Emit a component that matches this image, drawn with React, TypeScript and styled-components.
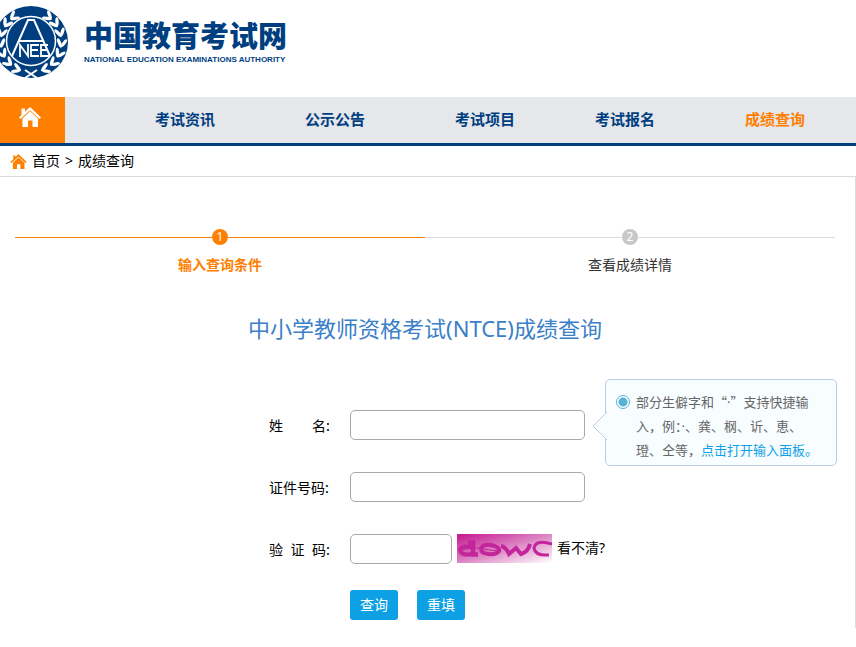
import React from 'react';
import styled, { createGlobalStyle } from 'styled-components';

const GlobalStyle = createGlobalStyle`
  * { box-sizing: border-box; }
  body {
    margin: 0;
    background: #fff;
    color: #000;
    font: 14px/20px "Noto Sans", "Noto Sans CJK SC", sans-serif;
  }
  a { color: inherit; text-decoration: none; }
  button, input { font: inherit; }
`;

const Header = styled.header`
  display: flex;
  gap: 16px;
  height: 97px;
  padding-top: 5px;
`;

const Emblem = styled.svg`
  flex: none;
  width: 68px;
  height: 74px;
`;

const Brand = styled.div`
  padding-top: 14px;
  color: #003f7f;
  white-space: nowrap;
`;

const BrandName = styled.div`
  font: 900 29px/30px "Noto Sans CJK SC", sans-serif;
`;

const BrandSub = styled.div`
  padding-top: 6px;
  font: bold 8px/10px "Liberation Sans", sans-serif;
`;

const Nav = styled.nav`
  display: flex;
  height: 49px;
  background: #e6e7eb;
  border-bottom: 3px solid #003f7f;
`;

const HomeTab = styled.a`
  display: flex;
  justify-content: center;
  width: 65px;
  padding: 9px 5px 0 0;
  background: #ff8000;
  color: #fff;
`;

const NavList = styled.ul`
  display: flex;
  margin: 0;
  padding: 0 0 0 45px;
  list-style: none;
`;

const NavItem = styled.li<{ $tight?: boolean }>`
  padding: 0 45px 0 ${p => (p.$tight ? 35 : 45)}px;
`;

const NavLink = styled.a<{ $active?: boolean }>`
  color: ${p => (p.$active ? '#ff8000' : '#003f7f')};
  font-size: 15px;
  font-weight: bold;
  line-height: 44px;
  white-space: nowrap;
`;

const Crumbs = styled.nav`
  display: flex;
  align-items: center;
  gap: 5px;
  height: 30px;
  padding-left: 10px;
`;

const Panel = styled.main`
  border: solid #dcdcdc;
  border-width: 1px 1px 0 0;
  padding: 52px 20px 8px 15px;
`;

const Steps = styled.ol`
  display: flex;
  margin: 0;
  padding: 0;
  list-style: none;
`;

const Step = styled.li<{ $active?: boolean }>`
  flex: 1;
  display: flex;
  flex-direction: column;
  align-items: center;
  gap: 10px;
  color: ${p => (p.$active ? '#ff8000' : '#333')};
  font-weight: ${p => (p.$active ? 'bold' : 'normal')};
`;

const StepTrack = styled.div<{ $active?: boolean }>`
  display: flex;
  align-items: center;
  width: 100%;
  color: ${p => (p.$active ? '#ff8000' : '#dcdcdc')};
  &::before, &::after {
    content: "";
    flex: 1;
    height: 1px;
    background: currentColor;
  }
`;

const StepDot = styled.span<{ $active?: boolean }>`
  display: block;
  width: 16px;
  height: 16px;
  border-radius: 50%;
  background: ${p => (p.$active ? '#ff8000' : '#c8c8c8')};
  color: #fff;
  font: 12px/16px "Noto Sans", sans-serif;
  text-align: center;
`;

const Title = styled.h1`
  margin: 37px 0 66px;
  color: #3a80c8;
  font-size: 22px;
  font-weight: normal;
  line-height: 32px;
  text-align: center;
`;

const Form = styled.form`
  display: grid;
  grid-template-columns: 61px minmax(0, 1fr);
  column-gap: 20px;
  row-gap: 32px;
  width: 566px;
  margin-left: calc(50% - 156px);
`;

const Label = styled.label`
  display: flex;
  justify-content: space-between;
  height: 30px;
  line-height: 30px;
  font-family: "Noto Sans CJK SC", sans-serif;
  white-space: nowrap;
`;

const Field = styled.div`
  display: flex;
  height: 30px;
  gap: 5px;
`;

const TextInput = styled.input<{ $short?: boolean }>`
  flex: none;
  width: ${p => (p.$short ? 102 : 235)}px;
  height: 30px;
  padding: 0 8px;
  border: 1px solid #a9a9a9;
  border-radius: 5px;
  background: #fff;
`;

const Anchor = styled.div`
  position: relative;
`;

const Tip = styled.aside`
  position: absolute;
  top: -31px;
  left: 255px;
  display: flex;
  gap: 6px;
  width: 232px;
  height: 87px;
  padding: 10px 20px 0 10px;
  border: 1px solid #bccbe8;
  border-radius: 5px;
  background: #f8fdff;
  color: #666;
  font: 13px/24px "Noto Sans CJK SC", sans-serif;
  p { margin: 0; white-space: nowrap; }
  a { color: #0ea0e4; }
`;

const Dot = styled.span`
  font-family: "Noto Sans", sans-serif;
`;

const TipArrow = styled.svg`
  position: absolute;
  top: 31px;
  left: -15px;
  width: 16px;
  height: 30px;
`;

const TipRadio = styled.input`
  appearance: none;
  flex: none;
  width: 14px;
  height: 14px;
  margin: 5px 0 0 0;
  border: 1px solid #58b2d4;
  border-radius: 50%;
  background: radial-gradient(circle, #58b2d4 4px, #fff 5px);
`;

const Refresh = styled.a`
  line-height: 28px;
  white-space: nowrap;
`;

const Actions = styled.div`
  grid-column: 2;
  display: flex;
  gap: 19px;
  margin-top: -6px;
`;

const Action = styled.button`
  width: 48px;
  height: 30px;
  padding: 0;
  border: 0;
  border-radius: 3px;
  background: #0ea0e4;
  color: #fff;
`;

function HomeIcon({ width, height }: { width: number; height: number }) {
  return (
    <svg width={width} height={height} viewBox="0 0 22 20" fill="currentColor" aria-hidden="true">
      <path d="M11 0 22 10.500 20.500 12 11 3.300 1.500 12 0 10.500 2.500 8V1.500H6V4.800Z" />
      <path d="M11 4.300 19 11.500V20H13.500V13.500H9V20H3.500V11.500Z" />
    </svg>
  );
}

const stemAngles = [118, 138, 158, 178, 198, 218, 236];

function Wreath() {
  return (
    <g>
      {stemAngles.map(deg => {
        const a = (deg * Math.PI) / 180;
        const at = (r: number) => [31 + r * Math.cos(a), 37 + r * Math.sin(a)];
        const [ix, iy] = at(28.5);
        const [ox, oy] = at(33);
        return (
          <g key={deg} fill="#fff">
            <ellipse cx={ix} cy={iy} rx="1.700" ry="5" transform={`rotate(${deg - 155} ${ix} ${iy})`} />
            <ellipse cx={ox} cy={oy} rx="1.700" ry="4.500" transform={`rotate(${deg - 215} ${ox} ${oy})`} />
          </g>
        );
      })}
    </g>
  );
}

function Logo() {
  return (
    <Emblem viewBox="0 0 68 74" role="img" aria-label="NEEA">
      <ellipse cx="31" cy="37" rx="37" ry="36" fill="#003f7f" />
      <Wreath />
      <g transform="translate(62 0) scale(-1 1)"><Wreath /></g>
      <circle cx="31" cy="36" r="24.500" fill="#003f7f" stroke="#fff" strokeWidth="1.500" />
      <g fill="none" stroke="#fff" strokeWidth="2">
        <path d="M12 51 28 15H34L50 51M19 36H43" />
        <path d="M20 52V40L28 51V39M39 40H31V51H39M31 45H38M48 40H41V51H50M41 45H48" strokeWidth="1.800" />
        <path d="M25 65 37 73M37 65 25 73" />
      </g>
    </Emblem>
  );
}

function Captcha() {
  return (
    <svg width="95" height="29" viewBox="0 0 95 29" role="img" aria-label="dowc">
      <defs>
        <linearGradient id="shade" x1="0" y1="0" x2="1" y2="1">
          <stop offset="0" stopColor="#c7158f" />
          <stop offset="0.500" stopColor="#dc86c4" />
          <stop offset="1" stopColor="#fff" />
        </linearGradient>
      </defs>
      <rect width="95" height="29" fill="url(#shade)" />
      <g fill="none" stroke="#c3269a" strokeWidth="4">
        <path d="M15 13Q4 11 3 16Q4 22 15 20" />
        <path d="M11 8.500H16V20.500H21" strokeWidth="4.500" />
        <path d="M24 15Q25 10 34 11Q43 13 42 17Q39 21 31 20Q24 19 24 15Z" />
        <path d="M44 12Q49 13 52 20L59 14 64 20Q71 18 73 10" />
        <path d="M95 10Q79 5 77 14Q78 22 92 21" strokeWidth="3" />
      </g>
      <path d="M2 17Q15 12 27 15T43 15" fill="none" stroke="#c3269a" />
    </svg>
  );
}

const links = ['考试资讯', '公示公告', '考试项目', '考试报名', '成绩查询'];

export default function App() {
  return (
    <>
      <GlobalStyle />
      <Header>
        <Logo />
        <Brand>
          <BrandName>中国教育考试网</BrandName>
          <BrandSub>NATIONAL EDUCATION EXAMINATIONS AUTHORITY</BrandSub>
        </Brand>
      </Header>
      <Nav>
        <HomeTab href="#" aria-label="首页"><HomeIcon width={22} height={22} /></HomeTab>
        <NavList>
          {links.map((text, i) => (
            <NavItem key={text} $tight={i === 3}>
              <NavLink href="#" $active={i === 4}>{text}</NavLink>
            </NavItem>
          ))}
        </NavList>
      </Nav>
      <Crumbs>
        <svg width="17" height="15" viewBox="0 0 22 20" fill="#ff8000" aria-hidden="true">
          <path d="M11 0 22 10.500 20.500 12 11 3.500 1.500 12 0 10.500 4 7V2H7V4Z" />
          <path d="M11 4.500 19 11.500V20H13.500V13.500H9V20H3.500V11.500Z" />
        </svg>
        <a href="#">首页</a>
        <span>&gt;</span>
        <a href="#">成绩查询</a>
      </Crumbs>
      <Panel>
        <Steps>
          <Step $active>
            <StepTrack $active><StepDot $active>1</StepDot></StepTrack>
            输入查询条件
          </Step>
          <Step>
            <StepTrack><StepDot>2</StepDot></StepTrack>
            查看成绩详情
          </Step>
        </Steps>
        <Title>中小学教师资格考试(NTCE)成绩查询</Title>
        <Form>
          <Label htmlFor="name"><span>姓</span><span>名:</span></Label>
          <Anchor>
            <TextInput id="name" type="text" />
            <Tip>
              <TipArrow viewBox="0 0 16 30" aria-hidden="true">
                <path d="M16 1 2 15 16 29" fill="#f8fdff" stroke="#bccbe8" />
              </TipArrow>
              <TipRadio type="radio" defaultChecked aria-label="快捷输入" />
              <p>
                部分生僻字和“<Dot>·</Dot>”支持快捷输<br />
                入，例：<Dot>·</Dot>、龚、㭎、䜣、恵、<br />
                璒、仝等，<a href="#">点击打开输入面板。</a>
              </p>
            </Tip>
          </Anchor>
          <Label htmlFor="idno">证件号码:</Label>
          <Field><TextInput id="idno" type="text" /></Field>
          <Label htmlFor="code"><span>验</span><span>证</span><span>码:</span></Label>
          <Field>
            <TextInput id="code" type="text" $short />
            <Captcha />
            <Refresh href="#">看不清?</Refresh>
          </Field>
          <Actions>
            <Action type="submit">查询</Action>
            <Action type="reset">重填</Action>
          </Actions>
        </Form>
      </Panel>
    </>
  );
}
